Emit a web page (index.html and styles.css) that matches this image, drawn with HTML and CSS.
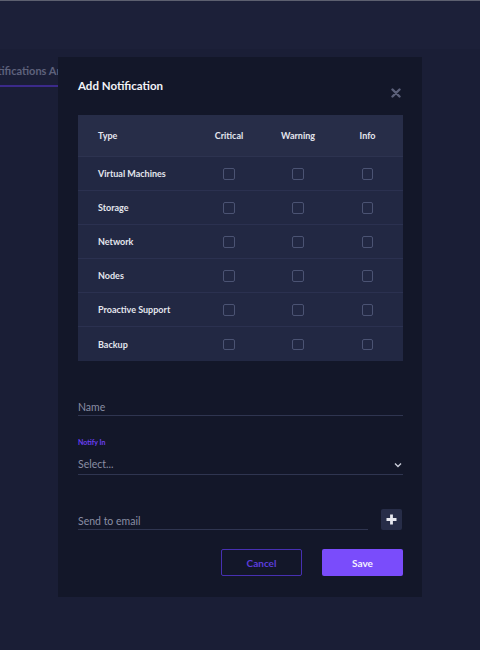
FILE: index.html
```html
<!DOCTYPE html>
<html lang="en">
<head>
<meta charset="utf-8">
<title>Add Notification</title>
<link rel="stylesheet" href="styles.css">
</head>
<body>
<div class="page">
  <header class="topbar"></header>
  <nav class="tabs">
    <div class="tab active">Notifications Areas</div>
  </nav>
</div>

<div class="modal">
  <div class="modal-head">
    <h2 class="modal-title">Add Notification</h2>
    <button class="close" aria-label="Close">
      <svg width="10" height="10" viewBox="0 0 10 10"><path d="M1.5 1.5 L8.5 8.5 M8.5 1.5 L1.5 8.5" stroke="#5b6079" stroke-width="2.4" stroke-linecap="round"/></svg>
    </button>
  </div>

  <table class="grid">
    <thead>
      <tr><th class="type">Type</th><th>Critical</th><th>Warning</th><th>Info</th></tr>
    </thead>
    <tbody>
      <tr><td class="type">Virtual Machines</td><td><span class="cb"></span></td><td><span class="cb"></span></td><td><span class="cb"></span></td></tr>
      <tr><td class="type">Storage</td><td><span class="cb"></span></td><td><span class="cb"></span></td><td><span class="cb"></span></td></tr>
      <tr><td class="type">Network</td><td><span class="cb"></span></td><td><span class="cb"></span></td><td><span class="cb"></span></td></tr>
      <tr><td class="type">Nodes</td><td><span class="cb"></span></td><td><span class="cb"></span></td><td><span class="cb"></span></td></tr>
      <tr><td class="type">Proactive Support</td><td><span class="cb"></span></td><td><span class="cb"></span></td><td><span class="cb"></span></td></tr>
      <tr><td class="type">Backup</td><td><span class="cb"></span></td><td><span class="cb"></span></td><td><span class="cb"></span></td></tr>
    </tbody>
  </table>

  <div class="field name-field">
    <span class="placeholder">Name</span>
  </div>

  <div class="field select-field">
    <label class="field-label">Notify In</label>
    <div class="select-row">
      <span class="placeholder">Select...</span>
      <svg class="chev" width="8" height="6" viewBox="0 0 8 6"><path d="M1 1.5 L4 4.5 L7 1.5" fill="none" stroke="#c9ccd8" stroke-width="1.4"/></svg>
    </div>
  </div>

  <div class="email-row">
    <div class="field email-field">
      <span class="placeholder">Send to email</span>
    </div>
    <button class="add" aria-label="Add">
      <svg width="11" height="11" viewBox="0 0 11 11"><path d="M5.5 0.5 V10.5 M0.5 5.5 H10.5" stroke="#e8e9f0" stroke-width="2.8"/></svg>
    </button>
  </div>

  <div class="actions">
    <button class="btn cancel">Cancel</button>
    <button class="btn save">Save</button>
  </div>
</div>
</body>
</html>
```

FILE: styles.css
```css
html, body {
  margin: 0;
  padding: 0;
}
body {
  background: #1a1e36;
  font-family: Lato, "Noto Sans", sans-serif;
  width: 480px;
  height: 650px;
  overflow: hidden;
  position: relative;
  border-top: 1px solid #5d6070;
  box-sizing: border-box;
}
.topbar {
  height: 48px;
  background: #1c2039;
}
.tabs {
  display: flex;
  margin-left: -17px;
  padding-top: 15px;
}
.tab {
  color: #5e627c;
  font-size: 11px;
  font-weight: 700;
  padding: 0 0 8px;
  border-bottom: 2px solid #3b2a8a;
  width: 120px;
  white-space: nowrap;
}
.modal {
  position: absolute;
  left: 58px;
  top: 56px;
  width: 364px;
  height: 540px;
  background: #131729;
  box-sizing: border-box;
  padding: 0 19px 0 20px;
}
.modal-head {
  display: flex;
  justify-content: space-between;
  align-items: flex-start;
  height: 58px;
}
.modal-title {
  margin: 22px 0 0;
  font-size: 11.5px;
  font-weight: 700;
  color: #f2f3f7;
}
.close {
  background: none;
  border: 0;
  padding: 0;
  margin: 31px 2px 0 0;
  line-height: 0;
}
.grid {
  width: 325px;
  border-collapse: collapse;
  background: #222843;
  table-layout: fixed;
}
.grid th {
  background: #272d48;
  height: 41px;
  color: #e4e6ee;
  font-size: 9px;
  font-weight: 700;
  text-align: center;
  padding: 0;
  border-bottom: 1px solid #2d3350;
}
.grid th.type, .grid td.type {
  text-align: left;
  padding-left: 20px;
  width: 96px;
}
.grid th:nth-child(2), .grid td:nth-child(2) { width: 70px; }
.grid th:nth-child(3), .grid td:nth-child(3) { width: 68px; }
.grid td {
  height: 33px;
  padding: 0;
  text-align: center;
  color: #e4e6ee;
  font-size: 9px;
  font-weight: 700;
  border-bottom: 1px solid #2b3150;
  vertical-align: middle;
}
.grid tbody tr:last-child td { border-bottom: 0; height: 34px; }
.cb {
  display: inline-block;
  width: 9.5px;
  height: 9.5px;
  border: 1.5px solid #4b5373;
  border-radius: 2px;
  vertical-align: middle;
}
.field {
  border-bottom: 1px solid #2f3550;
  box-sizing: border-box;
}
.placeholder {
  color: #8a8ea4;
  font-size: 10.5px;
}
.name-field {
  margin-top: 34px;
  padding-bottom: 1px;
}
.select-field {
  margin-top: 22px;
}
.field-label {
  display: block;
  color: #6a3ff0;
  font-size: 7px;
  font-weight: 700;
  margin-bottom: 12px;
}
.select-row {
  display: flex;
  justify-content: space-between;
  align-items: center;
  padding-bottom: 4px;
}
.chev { margin-right: 1px; margin-top: 2px; }
.email-row {
  display: flex;
  align-items: flex-end;
  justify-content: space-between;
  margin-top: 34px;
}
.email-field {
  width: 290px;
  padding-bottom: 1px;
}
.add {
  width: 21px;
  height: 21px;
  background: #272d48;
  border: 0;
  border-radius: 2px;
  padding: 0;
  display: flex;
  align-items: center;
  justify-content: center;
  margin: 0 1px 0 0;
}
.actions {
  display: flex;
  justify-content: flex-end;
  gap: 20px;
  margin-top: 19px;
}
.btn {
  width: 81px;
  height: 27px;
  border-radius: 2px;
  font-family: Lato, "Noto Sans", sans-serif;
  font-size: 10px;
  font-weight: 700;
  padding: 0;
  box-sizing: border-box;
}
.cancel {
  background: transparent;
  border: 1px solid #4730b2;
  color: #5c3ddb;
}
.save {
  background: #7a4cfb;
  border: 0;
  color: #f4f1ff;
}
```
